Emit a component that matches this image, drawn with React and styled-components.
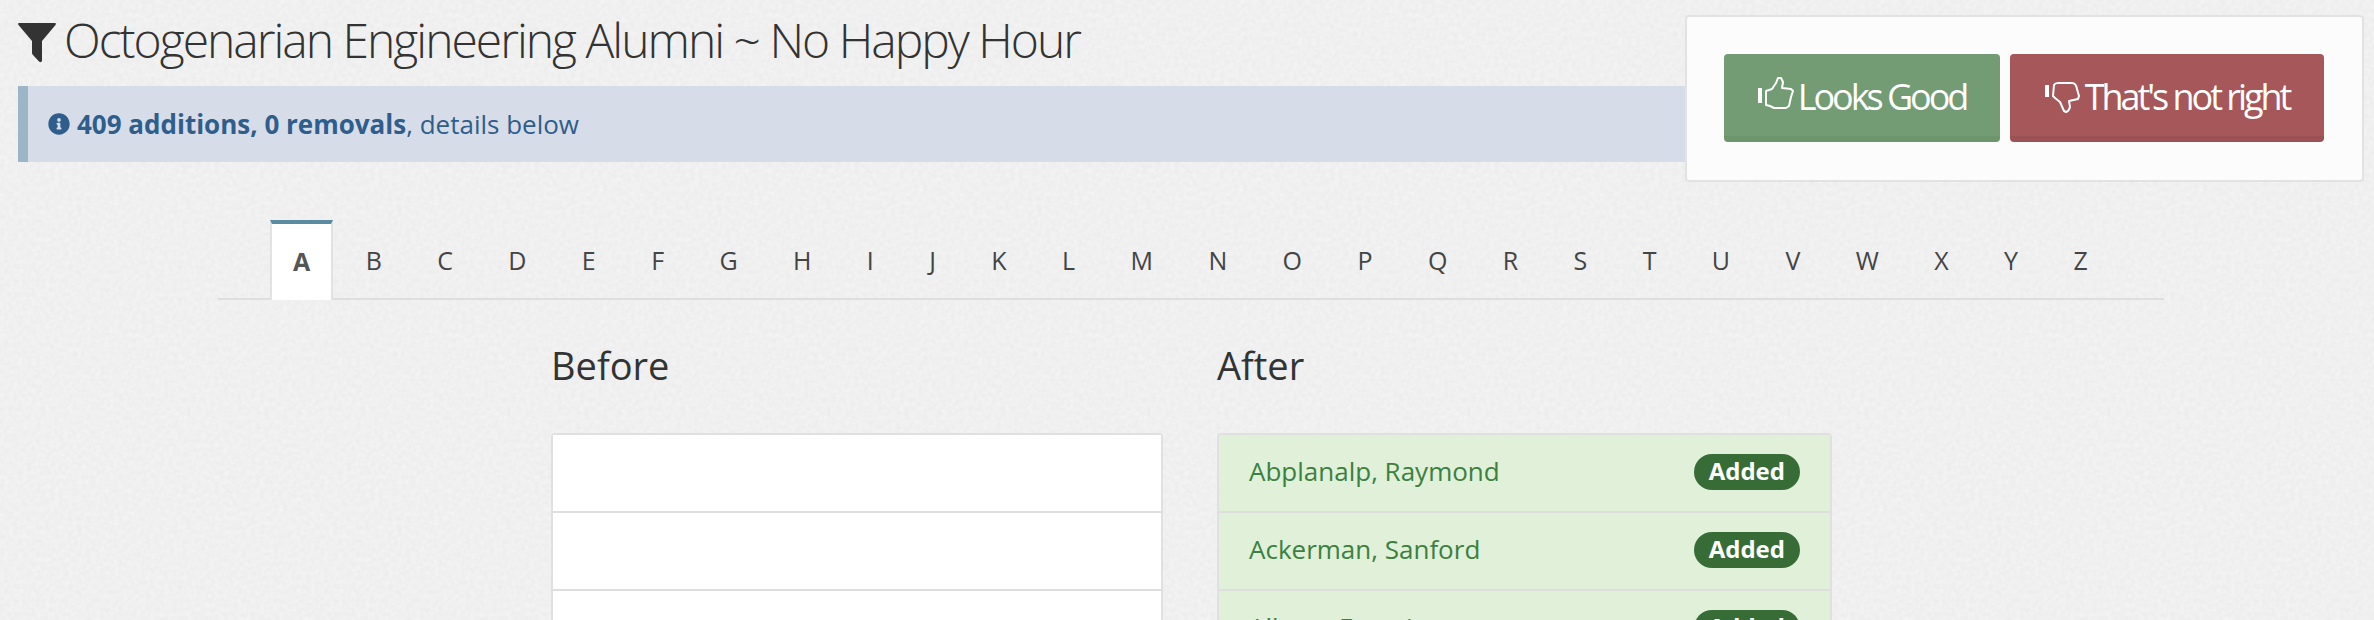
import React from "react";
import styled, { createGlobalStyle } from "styled-components";
import { FaInfoCircle } from "react-icons/fa";

const paperNoise = encodeURIComponent(
  `<svg xmlns="http://www.w3.org/2000/svg" width="320" height="320"><filter id="n"><feTurbulence type="fractalNoise" baseFrequency="0.22" numOctaves="2" stitchTiles="stitch"/><feColorMatrix values="0 0 0 0 1 0 0 0 0 1 0 0 0 0 1 0.6 0 0 0 -0.15"/></filter><rect width="320" height="320" filter="url(#n)"/></svg>`
);

const Global = createGlobalStyle`
  html, body { margin: 0; padding: 0; background: #ededed url("data:image/svg+xml,${paperNoise}"); }
  body { font-family: "Open Sans", "Liberation Sans", sans-serif; color: #333; overflow: hidden; height: 620px; }
`;

const Page = styled.div`
  position: relative;
  height: 620px;
  overflow: hidden;
  padding: 14px 18px 0;
  box-sizing: border-box;
`;

const Title = styled.h1`
  display: flex;
  align-items: flex-start;
  gap: 8px;
  margin: 0 0 14px;
  height: 58px;
  font-size: 48px;
  line-height: 52px;
  font-weight: 300;
  letter-spacing: -2px;
  color: #333;
  white-space: nowrap;
`;

const FilterIcon = styled.svg`
  width: 38px;
  height: 40px;
  margin-top: 9px;
  fill: #333;
  flex: none;
`;

const Alert = styled.div`
  display: flex;
  align-items: center;
  gap: 7px;
  height: 76px;
  box-sizing: border-box;
  padding-left: 20px;
  margin-right: 10px;
  background: #d6dde8;
  border-left: 10px solid #9cb6c8;
  color: #2f5d8c;
  font-size: 26px;
  svg { width: 22px; height: 22px; flex: none; }
  strong { font-weight: 700; }
`;

const ActionPanel = styled.div`
  position: absolute;
  top: 15px;
  right: 10px;
  width: 679px;
  height: 167px;
  box-sizing: border-box;
  display: flex;
  gap: 10px;
  padding: 37px 37px;
  background: #fcfcfc;
  border: 2px solid #e2e2e2;
  border-radius: 4px;
`;

const ActionButton = styled.div`
  display: flex;
  align-items: center;
  justify-content: center;
  gap: 4px;
  width: ${p => p.$width}px;
  height: 88px;
  box-sizing: border-box;
  padding-top: 3px;
  color: #fff;
  font-size: 36px;
  letter-spacing: -3.05px;
  white-space: nowrap;
  border-radius: 4px;
  background: ${p => p.$bg};
  border-bottom: 6px solid ${p => p.$edge};
`;

const ThumbIcon = styled.svg`
  width: 36px;
  height: 32px;
  flex: none;
  margin-top: ${p => (p.$down ? "2px" : "-7px")};
  fill: none;
  stroke: #fff;
  stroke-width: 2;
  stroke-linejoin: round;
  rect { fill: #fff; stroke: none; }
`;

const Tabs = styled.div`
  display: flex;
  margin: 58px 192px 0 200px;
  padding-left: 52px;
  height: 80px;
  border-bottom: 2px solid #dedede;
  box-sizing: border-box;
`;

const Tab = styled.div`
  display: flex;
  align-items: center;
  justify-content: center;
  box-sizing: border-box;
  height: 80px;
  padding: 0 23px 1px;
  margin-right: 9.4px;
  font-size: 25px;
  color: #444;
  ${p => p.$active && `
    background: #fff;
    font-weight: 700;
    color: #555;
    border: 2px solid #e2e2e2;
    border-top: 4px solid #5a8ba0;
    border-bottom: none;
    padding: 0 21px 3px;
  `}
`;

const Columns = styled.div`
  display: grid;
  grid-template-columns: 612px 615px;
  column-gap: 54px;
  margin: 0 0 0 533px;
`;

const Heading = styled.h3`
  margin: 36px 0 38px;
  height: 59px;
  font-size: 38px;
  line-height: 59px;
  font-weight: 400;
  color: #333;
`;

const List = styled.div`
  border: 2px solid #e0e0e0;
  border-bottom: none;
  border-radius: 4px 4px 0 0;
`;

const Row = styled.div`
  display: flex;
  align-items: center;
  justify-content: space-between;
  height: 78px;
  box-sizing: border-box;
  padding: 0 30px;
  border-bottom: 2px solid #dedede;
  background: ${p => (p.$added ? "#e0f0d9" : "#fff")};
  color: #3c803f;
  font-size: 26px;
`;

const Name = styled.span`
  padding-bottom: 4px;
`;

const Badge = styled.span`
  display: inline-flex;
  align-items: center;
  height: 36px;
  padding: 0 15px 3px;
  box-sizing: border-box;
  border-radius: 18px;
  background: #376c37;
  color: #fff;
  font-size: 24px;
  font-weight: 700;
  transform: translateY(-1px);
`;

const letters = "ABCDEFGHIJKLMNOPQRSTUVWXYZ".split("");
const added = ["Abplanalp, Raymond", "Ackerman, Sanford", "Albers, Francis"];

export default function App() {
  return (
    <Page>
      <Global />
      <Title>
        <FilterIcon viewBox="0 0 38 40">
          <path d="M1 0H37Q38.500 0 37.500 2L24 18V38Q23 40 21 38.500L15 32Q14 31 14 30V18L.5 2Q-.5 0 1 0Z" />
        </FilterIcon>
        Octogenarian Engineering Alumni ~ No Happy Hour
      </Title>
      <Alert>
        <FaInfoCircle />
        <span><strong>409 additions, 0 removals</strong>, details below</span>
      </Alert>
      <ActionPanel>
        <ActionButton $width={276} $bg="#739c74" $edge="#6d956e">
          <ThumbIcon viewBox="0 0 36 32">
            <rect x="0" y="11" width="4" height="15" />
            <path d="M8 14L14 12L18 6L20 1L23 1L25 5L24 11L33 12L35 14L33 20L31 29L28 31L16 31L12 29L8 28Z" />
          </ThumbIcon>
          Looks Good
        </ActionButton>
        <ActionButton $width={314} $bg="#a5575a" $edge="#9c5255">
          <ThumbIcon viewBox="0 0 36 32" $down>
            <rect x="0" y="3" width="4" height="12" />
            <path d="M8 14L9 3Q10 1 13 1L27 1Q31 1 32 7L34 14L33 17L24 19L25 25Q24 29 21 30L19 29L15 20L10 16Z" />
          </ThumbIcon>
          That's not right
        </ActionButton>
      </ActionPanel>
      <Tabs>
        {letters.map((l, i) => (
          <Tab key={l} $active={i === 0}>{l}</Tab>
        ))}
      </Tabs>
      <Columns>
        <div>
          <Heading>Before</Heading>
          <List>
            <Row /><Row /><Row />
          </List>
        </div>
        <div>
          <Heading>After</Heading>
          <List>
            {added.map(n => (
              <Row key={n} $added>
                <Name>{n}</Name>
                <Badge>Added</Badge>
              </Row>
            ))}
          </List>
        </div>
      </Columns>
    </Page>
  );
}
